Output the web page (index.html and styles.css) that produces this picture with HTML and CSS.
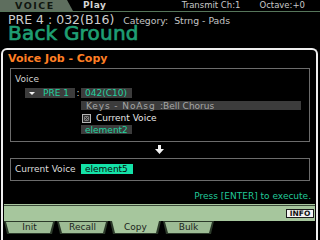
FILE: index.html
```html
<!DOCTYPE html>
<html>
<head>
<meta charset="utf-8">
<link rel="stylesheet" href="styles.css">
</head>
<body>
<div class="screen">
  <div class="topbar">
    <div class="modetab">VOICE</div>
    <div class="play">Play</div>
    <div class="transmit">Transmit Ch:1</div>
    <div class="octave">Octave:+0</div>
  </div>
  <div class="infoline">
    <span class="voicenum">PRE 4 : 032(B16)</span>
    <span class="category">Category:&nbsp; Strng - Pads</span>
  </div>
  <div class="voicename">Back Ground</div>
  <div class="frame">
    <div class="title">Voice Job - Copy</div>
    <div class="box source">
      <div class="label">Voice</div>
      <div class="row r1">
        <div class="field bank">
          <svg class="tri" width="6" height="3" viewBox="0 0 6 3"><polygon points="0,0 6,0 3,3" fill="#f0f0f0"/></svg>
          <span class="green">PRE 1</span>
        </div>
        <span class="colon">:</span>
        <div class="field num green">042(C10)</div>
      </div>
      <div class="row r2">
        <div class="field cat"><span class="catname">Keys - NoAsg</span><span>:Bell Chorus</span></div>
      </div>
      <div class="row r3">
        <svg class="check" width="9" height="9" viewBox="0 0 9 9">
          <rect x="0.5" y="0.5" width="8" height="8" fill="#2a2a2a" stroke="#b4b4b4"/>
          <rect x="2" y="2" width="5" height="5" fill="#7a7a7a"/>
          <path d="M2.5 2.5 L6.5 6.5 M6.5 2.5 L2.5 6.5" stroke="#2a2a2a" stroke-width="1"/>
        </svg>
        <span class="cur">Current Voice</span>
      </div>
      <div class="row r4">
        <div class="field num green">element2</div>
      </div>
    </div>
    <div class="arrow">
      <svg width="9" height="9" viewBox="0 0 9 9"><path d="M3 0 H6 V4 H9 L4.5 9 L0 4 H3 Z" fill="#f4f4f4"/></svg>
    </div>
    <div class="box dest">
      <span class="destlabel">Current Voice</span>
      <div class="field sel">element5</div>
    </div>
    <div class="msg">Press [ENTER] to execute.</div>
    <div class="bar"><div class="info">INFO</div></div>
    <div class="tabs">
      <div class="tab"><span>Init</span></div>
      <div class="tab"><span>Recall</span></div>
      <div class="tab on"><span>Copy</span></div>
      <div class="tab"><span>Bulk</span></div>
    </div>
  </div>
</div>
</body>
</html>
```
FILE: styles.css
```css
html, body {
  margin: 0;
  padding: 0;
  background: #000;
}
body {
  width: 320px;
  height: 240px;
  overflow: hidden;
  font-family: "DejaVu Sans", sans-serif;
}
.screen {
  width: 320px;
  height: 240px;
  overflow: hidden;
}

/* top bar */
.topbar {
  display: flex;
  align-items: center;
  height: 11px;
  border-bottom: 1px solid #56755a;
}
.modetab {
  width: 73px;
  height: 11px;
  box-sizing: border-box;
  padding-left: 15px;
  background: #5e6e5e;
  clip-path: polygon(0 0, 67px 0, 73px 100%, 0 100%);
  color: #101610;
  font-weight: bold;
  font-size: 9.5px;
  letter-spacing: 1.5px;
  line-height: 11px;
}
.play {
  margin-left: 10px;
  font-weight: bold;
  font-size: 9px;
  letter-spacing: 0.5px;
  line-height: 11px;
  color: #d6d6d6;
}
.transmit {
  margin-left: auto;
  font-size: 8.5px;
  line-height: 11px;
  color: #c8c8c8;
}
.octave {
  margin-left: 19px;
  margin-right: 15px;
  font-size: 8.5px;
  line-height: 11px;
  color: #c8c8c8;
}

/* voice info */
.infoline {
  display: flex;
  align-items: baseline;
  margin-top: 1px;
  height: 13px;
  line-height: 13px;
  padding-left: 8px;
  white-space: nowrap;
}
.voicenum {
  font-size: 12.5px;
  color: #cdcdcd;
}
.category {
  margin-left: 9px;
  font-size: 9.3px;
  color: #c4c4c4;
}
.voicename {
  height: 15px;
  line-height: 15px;
  padding-left: 8px;
  font-family: "DejaVu Sans", sans-serif;
  font-size: 20px;
  letter-spacing: 0.2px;
  color: #1f9e73;
  -webkit-text-stroke: 0.7px #1f9e73;
  white-space: nowrap;
}

/* job frame */
.frame {
  margin: 7px 2px 0 1px;
  height: 192px;
  border: 2px solid #efefef;
  border-bottom: none;
  border-radius: 6px 6px 0 0;
  box-sizing: border-box;
}
.title {
  margin-top: 2px;
  padding-left: 5px;
  font-weight: bold;
  font-size: 11px;
  line-height: 13px;
  color: #ff7f24;
}
.box {
  margin: 3px 6px 0 7px;
  border: 1px solid #6c6c6c;
  padding-left: 4px;
}
.source {
  padding-bottom: 7px;
}
.label {
  margin-top: 5px;
  font-size: 9px;
  line-height: 11px;
  color: #d2d2d2;
}
.row {
  display: flex;
  align-items: center;
  font-size: 9px;
  white-space: nowrap;
}
.r1 { margin-top: 3px; height: 10px; }
.r2 { margin-top: 3px; height: 9px; margin-left: 66px; }
.r3 { margin-top: 3px; height: 10px; margin-left: 67px; }
.r4 { margin-top: 2px; height: 9px; margin-left: 66px; }

.field {
  height: 100%;
  box-sizing: border-box;
  background: #3c3c3c;
  display: flex;
  align-items: center;
  line-height: 10px;
}
.green { color: #22d3a0; }
.bank {
  margin-left: 10px;
  width: 50px;
  padding-left: 4px;
}
.bank .tri { display: block; margin-right: 8px; }
.colon {
  width: 6px;
  text-align: center;
  color: #cfcfcf;
  line-height: 10px;
}
.num {
  width: 51px;
  padding-left: 4px;
}
.cat {
  width: 220px;
  padding-left: 5px;
  color: #a6a6a6;
}
.catname {
  width: 74px;
  letter-spacing: 0.9px;
}
.check { display: block; }
.cur {
  margin-left: 5px;
  color: #e6e6e6;
  line-height: 10px;
}

.arrow {
  margin-top: 3px;
  height: 9px;
  display: flex;
  justify-content: center;
}
.arrow svg { display: block; }

.dest {
  margin-top: 4px;
  display: flex;
  align-items: center;
  padding-top: 5px;
  padding-bottom: 6px;
  font-size: 9px;
  white-space: nowrap;
}
.destlabel {
  width: 66px;
  color: #dedede;
  line-height: 10px;
}
.sel {
  height: 10px;
  width: 52px;
  padding-left: 4px;
  background: #14e2a8;
  color: #0a0a0a;
}

.msg {
  margin-top: 10px;
  padding-right: 5px;
  text-align: right;
  font-size: 9px;
  line-height: 11px;
  color: #20c898;
  white-space: nowrap;
}

/* bottom bar and tabs */
.bar {
  margin: 2px 1px 0 1px;
  height: 17px;
  box-sizing: border-box;
  border-top: 1px solid #a9c6a0;
  box-shadow: inset 0 1px 0 #3c4c3a;
  background: #a6c69d;
  display: flex;
  justify-content: flex-end;
  align-items: center;
  padding: 1px 1px 0 0;
}
.info {
  width: 28px;
  height: 9px;
  box-sizing: border-box;
  border: 1px solid #1a1a1a;
  background: #f4f4f4;
  color: #111;
  font-weight: bold;
  font-size: 7.5px;
  line-height: 7px;
  text-align: center;
}
.tabs {
  display: flex;
  gap: 2px;
  padding-left: 1px;
  height: 13px;
}
.tab {
  width: 51px;
  height: 13px;
  box-sizing: border-box;
  padding: 1px 2px 1px 2px;
  background: #2c3a2a;
  clip-path: polygon(0 0, 100% 0, calc(100% - 3px) 100%, 3px 100%);
}
.tab span {
  display: block;
  height: 100%;
  background: #9dbc95;
  clip-path: polygon(0 0, 100% 0, calc(100% - 3px) 100%, 3px 100%);
  text-align: center;
  font-size: 9px;
  line-height: 11px;
  color: #1c241c;
}
.tab.on {
  padding-top: 0;
}
.tab.on span {
  background: #a6c69d;
  line-height: 12px;
}
```
